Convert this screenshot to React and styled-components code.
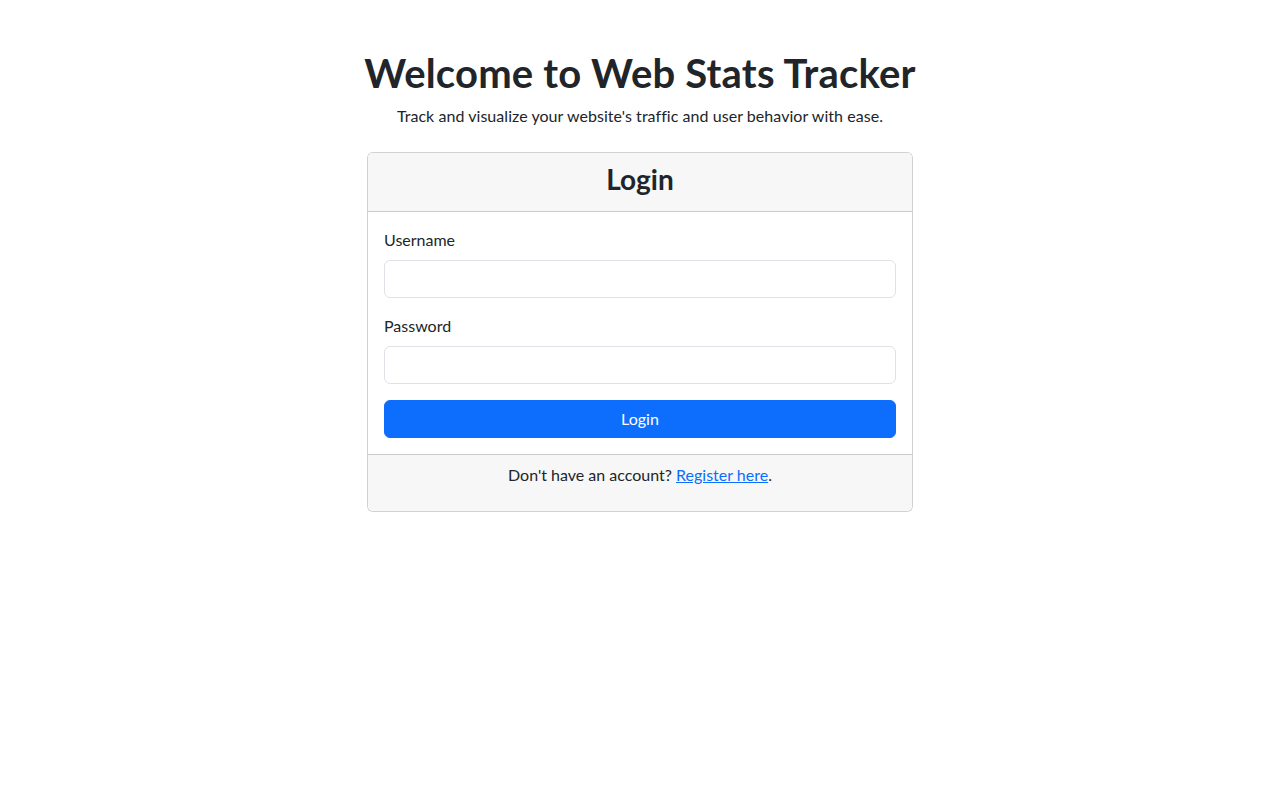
import React from "react";
import styled, { createGlobalStyle } from "styled-components";

const GlobalStyle = createGlobalStyle`
  *, *::before, *::after { box-sizing: border-box; }
  body {
    margin: 0;
    background: #fff;
    color: #212529;
    font-family: Lato, "Liberation Sans", sans-serif;
    font-size: 16px;
    line-height: 1.5;
  }
`;

const Container = styled.div`
  max-width: 1140px;
  margin: 48px auto 0;
  padding: 0 12px;
  display: flex;
  flex-direction: column;
  align-items: center;
`;

const Hero = styled.div`
  text-align: center;
  margin-bottom: 24px;
`;

const Title = styled.h1`
  margin: 0 0 8px;
  padding-top: 1px;
  height: 48px;
  font-size: 40px;
  line-height: 48px;
  font-weight: 700;
  letter-spacing: 0.2px;
`;

const Lead = styled.p`
  margin: 0;
  font-size: 16px;
  line-height: 24px;
  letter-spacing: 0.05px;
`;

const Column = styled.div`
  width: 570px;
  padding: 0 12px;
`;

const Card = styled.div`
  border: 1px solid rgba(0, 0, 0, 0.175);
  border-radius: 6px;
  background: #fff;
  overflow: hidden;
`;

const CardHeader = styled.div`
  padding: 10px 16px 6px;
  background: #f7f7f7;
  border-bottom: 1px solid rgba(0, 0, 0, 0.175);
  text-align: center;
`;

const CardTitle = styled.h3`
  margin: 0 0 8px;
  font-size: 28px;
  line-height: 33.6px;
  font-weight: 700;
`;

const CardBody = styled.form`
  padding: 16px;
`;

const Field = styled.div`
  margin-bottom: 16px;
`;

const Label = styled.label`
  display: block;
  margin-bottom: 8px;
  font-size: 16px;
  line-height: 24px;
`;

const Input = styled.input`
  display: block;
  width: 100%;
  height: 38px;
  padding: 6px 12px;
  font: inherit;
  color: #212529;
  background: #fff;
  border: 1px solid #dee2e6;
  border-radius: 6px;
  outline: none;
`;

const Button = styled.button`
  display: block;
  width: 100%;
  height: 38px;
  padding: 6px 12px;
  font: inherit;
  color: #fff;
  background: #0d6efd;
  border: 1px solid #0d6efd;
  border-radius: 6px;
  cursor: pointer;
`;

const CardFooter = styled.div`
  padding: 8px 16px;
  background: #f7f7f7;
  border-top: 1px solid rgba(0, 0, 0, 0.175);
  text-align: center;
`;

const FooterText = styled.p`
  margin: 0 0 16px;
`;

const Link = styled.a`
  color: #0d6efd;
  text-decoration: underline;
`;

export default function App() {
  return (
    <>
      <GlobalStyle />
      <Container>
        <Hero>
          <Title>Welcome to Web Stats Tracker</Title>
          <Lead>Track and visualize your website's traffic and user behavior with ease.</Lead>
        </Hero>
        <Column>
          <Card>
            <CardHeader>
              <CardTitle>Login</CardTitle>
            </CardHeader>
            <CardBody onSubmit={(e) => e.preventDefault()}>
              <Field>
                <Label htmlFor="username">Username</Label>
                <Input id="username" type="text" />
              </Field>
              <Field>
                <Label htmlFor="password">Password</Label>
                <Input id="password" type="password" />
              </Field>
              <Button type="submit">Login</Button>
            </CardBody>
            <CardFooter>
              <FooterText>
                Don't have an account? <Link href="#">Register here</Link>.
              </FooterText>
            </CardFooter>
          </Card>
        </Column>
      </Container>
    </>
  );
}
